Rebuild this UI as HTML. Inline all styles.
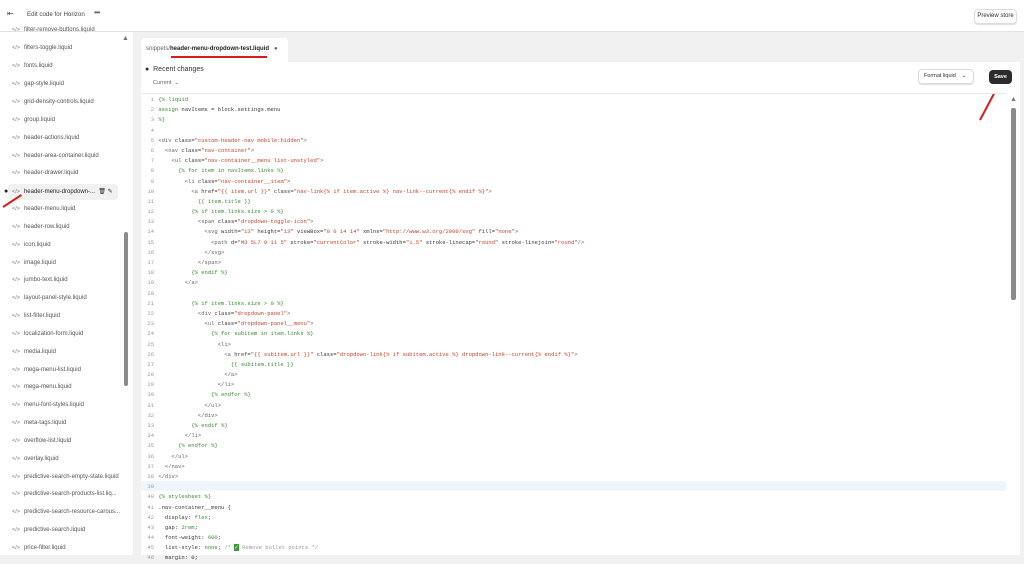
<!DOCTYPE html>
<html><head><meta charset="utf-8"><style>
*{margin:0;padding:0;box-sizing:border-box}
body{width:1024px;height:555px;overflow:hidden;background:#f1f1f1;font-family:"Liberation Sans",sans-serif;position:relative;color:#303030}
.top{position:absolute;left:0;top:0;width:1024px;height:32px;background:#fff;border-bottom:1px solid #e3e3e3}
.top .t{position:absolute;left:27px;top:11px;font-size:6.2px;color:#444}
.top .dots{position:absolute;left:94px;top:8px;font-size:8px;color:#666;letter-spacing:-1px}
.prev{position:absolute;left:974px;top:9px;width:43px;height:15px;border:1px solid #ddd;border-radius:4px;font-size:6px;text-align:center;line-height:13px;background:#fff;box-shadow:0 1px 1px #ddd}
.side{position:absolute;left:0;top:32px;width:133px;height:523px;background:#fff}
.it{position:absolute;left:12px;font-size:6px;color:#555;white-space:nowrap}
.it i{font-style:normal;color:#777;margin-right:4px;font-size:5.5px}
.sel{position:absolute;left:8px;top:152px;width:110px;height:16px;background:#f1f1f1;border-radius:4px}
.sb{position:absolute;left:124px;top:200px;width:4px;height:154px;background:#8a8a8a;border-radius:2px}
.tab{position:absolute;left:141px;top:38px;width:147px;height:25px;background:#fff;border-radius:4px 4px 0 0}
.tab span{position:absolute;left:5px;top:8px;font-size:6px;color:#666;white-space:nowrap}
.tab b{color:#222}
.ul{position:absolute;left:171px;top:56px;width:96px;height:2px;background:#d91c1c}
.panel{position:absolute;left:141px;top:62px;width:879px;height:493px;background:#fff}
.rc{position:absolute;left:145px;top:66px;font-size:7px;color:#333}
.cur{position:absolute;left:153px;top:80px;font-size:5.5px;color:#666}
.fmt{position:absolute;left:918px;top:69px;width:56px;height:15px;border:1px solid #ddd;border-radius:4px;font-size:5.5px;line-height:13px;padding-left:5px;box-shadow:0 1px 1px #ddd}
.save{position:absolute;left:989px;top:70px;width:23px;height:14px;background:#2c2c2c;border-radius:4px;color:#fff;font-size:5.5px;font-weight:bold;text-align:center;line-height:14px}
.hr{position:absolute;left:141px;top:93px;width:865px;height:1px;background:#e8e8e8}
.code{position:absolute;left:141px;top:95px;font-family:"Liberation Mono",monospace;font-size:5.5px;line-height:10.18px;white-space:pre;color:#3a3a3a}
.ln{display:inline-block;width:13px;text-align:right;color:#999;margin-right:1px}
.g{color:#3d8b37}.s{color:#c4452c}.t{color:#666}
.hl{position:absolute;left:141px;top:481px;width:865px;height:10px;background:#eef5fb}
.msb{position:absolute;left:1011px;top:108px;width:5px;height:192px;background:#8a8a8a;border-radius:2px}
.arr{position:absolute;height:2px;background:#d91c1c;transform-origin:0 50%}
</style></head><body>
<div class="top"><span style="position:absolute;left:7px;top:9px;font-size:8px;color:#555">⇤</span><span class="t">Edit code for Horizon</span><span class="dots">•••</span><div class="prev">Preview store</div></div>
<div class="side">
<div class="sel"></div>
<div class="it" style="top:-5px"><i>&lt;/&gt;</i>filter-remove-buttons.liquid</div>
<div class="it" style="top:13px"><i>&lt;/&gt;</i>filters-toggle.liquid</div>
<div class="it" style="top:31px"><i>&lt;/&gt;</i>fonts.liquid</div>
<div class="it" style="top:49px"><i>&lt;/&gt;</i>gap-style.liquid</div>
<div class="it" style="top:67px"><i>&lt;/&gt;</i>grid-density-controls.liquid</div>
<div class="it" style="top:85px"><i>&lt;/&gt;</i>group.liquid</div>
<div class="it" style="top:103px"><i>&lt;/&gt;</i>header-actions.liquid</div>
<div class="it" style="top:121px"><i>&lt;/&gt;</i>header-area-container.liquid</div>
<div class="it" style="top:138px"><i>&lt;/&gt;</i>header-drawer.liquid</div>
<div class="it" style="top:156px;color:#222"><span style="position:absolute;left:-8px;font-size:7px">●</span><i>&lt;/&gt;</i>header-menu-dropdown-... &nbsp;🗑 ✎</div>
<div class="it" style="top:174px"><i>&lt;/&gt;</i>header-menu.liquid</div>
<div class="it" style="top:192px"><i>&lt;/&gt;</i>header-row.liquid</div>
<div class="it" style="top:210px"><i>&lt;/&gt;</i>icon.liquid</div>
<div class="it" style="top:228px"><i>&lt;/&gt;</i>image.liquid</div>
<div class="it" style="top:245px"><i>&lt;/&gt;</i>jumbo-text.liquid</div>
<div class="it" style="top:263px"><i>&lt;/&gt;</i>layout-panel-style.liquid</div>
<div class="it" style="top:281px"><i>&lt;/&gt;</i>list-filter.liquid</div>
<div class="it" style="top:299px"><i>&lt;/&gt;</i>localization-form.liquid</div>
<div class="it" style="top:317px"><i>&lt;/&gt;</i>media.liquid</div>
<div class="it" style="top:335px"><i>&lt;/&gt;</i>mega-menu-list.liquid</div>
<div class="it" style="top:352px"><i>&lt;/&gt;</i>mega-menu.liquid</div>
<div class="it" style="top:370px"><i>&lt;/&gt;</i>menu-font-styles.liquid</div>
<div class="it" style="top:388px"><i>&lt;/&gt;</i>meta-tags.liquid</div>
<div class="it" style="top:406px"><i>&lt;/&gt;</i>overflow-list.liquid</div>
<div class="it" style="top:424px"><i>&lt;/&gt;</i>overlay.liquid</div>
<div class="it" style="top:442px"><i>&lt;/&gt;</i>predictive-search-empty-state.liquid</div>
<div class="it" style="top:459px"><i>&lt;/&gt;</i>predictive-search-products-list.liq...</div>
<div class="it" style="top:477px"><i>&lt;/&gt;</i>predictive-search-resource-carous...</div>
<div class="it" style="top:495px"><i>&lt;/&gt;</i>predictive-search.liquid</div>
<div class="it" style="top:513px"><i>&lt;/&gt;</i>price-filter.liquid</div>
<div style="position:absolute;left:122px;top:3px;font-size:7px;color:#777">▲</div>
<div class="sb"></div>
</div>
<div class="arr" style="left:3px;top:206px;width:22px;transform:rotate(-33deg)"></div>
<div class="tab"><span>snippets/<b>header-menu-dropdown-test.liquid</b> &nbsp; ●</span></div>
<div class="ul"></div>
<div class="panel"></div>
<div class="rc">● &nbsp;Recent changes</div>
<div class="cur">Current &nbsp;⌄</div>
<div class="fmt">Format liquid &nbsp;&nbsp; ⌄</div>
<div class="save">Save</div>
<div class="arr" style="left:980px;top:119px;width:30px;transform:rotate(-62deg)"></div>
<div class="hr"></div>
<div class="hl"></div>
<div style="position:absolute;left:1010px;top:96px;font-size:7px;color:#777">▲</div>
<div class="msb"></div>
<div class="code"><span class="ln">1</span> <span class="g">{% liquid</span>
<span class="ln">2</span> <span class="g">assign</span> navItems = block.settings.menu
<span class="ln">3</span> <span class="g">%}</span>
<span class="ln">4</span>
<span class="ln">5</span> <span class="t">&lt;div</span> class=<span class="s">"custom-header-nav mobile:hidden"</span><span class="t">&gt;</span>
<span class="ln">6</span>   <span class="t">&lt;nav</span> class=<span class="s">"nav-container"</span><span class="t">&gt;</span>
<span class="ln">7</span>     <span class="t">&lt;ul</span> class=<span class="s">"nav-container__menu list-unstyled"</span><span class="t">&gt;</span>
<span class="ln">8</span>       <span class="g">{% for item in navItems.links %}</span>
<span class="ln">9</span>         <span class="t">&lt;li</span> class=<span class="s">"nav-container__item"</span><span class="t">&gt;</span>
<span class="ln">10</span>           <span class="t">&lt;a</span> href=<span class="s">"{{ item.url }}"</span> class=<span class="s">"nav-link{% if item.active %} nav-link--current{% endif %}"</span><span class="t">&gt;</span>
<span class="ln">11</span>             <span class="g">{{ item.title }}</span>
<span class="ln">12</span>           <span class="g">{% if item.links.size &gt; 0 %}</span>
<span class="ln">13</span>             <span class="t">&lt;span</span> class=<span class="s">"dropdown-toggle-icon"</span><span class="t">&gt;</span>
<span class="ln">14</span>               <span class="t">&lt;svg</span> width=<span class="s">"13"</span> height=<span class="s">"13"</span> viewBox=<span class="s">"0 0 14 14"</span> xmlns=<span class="s">"http://www.w3.org/2000/svg"</span> fill=<span class="s">"none"</span><span class="t">&gt;</span>
<span class="ln">15</span>                 <span class="t">&lt;path</span> d=<span class="s">"M3 5L7 9 11 5"</span> stroke=<span class="s">"currentColor"</span> stroke-width=<span class="s">"1.5"</span> stroke-linecap=<span class="s">"round"</span> stroke-linejoin=<span class="s">"round"</span><span class="t">/&gt;</span>
<span class="ln">16</span>               <span class="t">&lt;/svg&gt;</span>
<span class="ln">17</span>             <span class="t">&lt;/span&gt;</span>
<span class="ln">18</span>           <span class="g">{% endif %}</span>
<span class="ln">19</span>         <span class="t">&lt;/a&gt;</span>
<span class="ln">20</span>
<span class="ln">21</span>           <span class="g">{% if item.links.size &gt; 0 %}</span>
<span class="ln">22</span>             <span class="t">&lt;div</span> class=<span class="s">"dropdown-panel"</span><span class="t">&gt;</span>
<span class="ln">23</span>               <span class="t">&lt;ul</span> class=<span class="s">"dropdown-panel__menu"</span><span class="t">&gt;</span>
<span class="ln">24</span>                 <span class="g">{% for subitem in item.links %}</span>
<span class="ln">25</span>                   <span class="t">&lt;li&gt;</span>
<span class="ln">26</span>                     <span class="t">&lt;a</span> href=<span class="s">"{{ subitem.url }}"</span> class=<span class="s">"dropdown-link{% if subitem.active %} dropdown-link--current{% endif %}"</span><span class="t">&gt;</span>
<span class="ln">27</span>                       <span class="g">{{ subitem.title }}</span>
<span class="ln">28</span>                     <span class="t">&lt;/a&gt;</span>
<span class="ln">29</span>                   <span class="t">&lt;/li&gt;</span>
<span class="ln">30</span>                 <span class="g">{% endfor %}</span>
<span class="ln">31</span>               <span class="t">&lt;/ul&gt;</span>
<span class="ln">32</span>             <span class="t">&lt;/div&gt;</span>
<span class="ln">33</span>           <span class="g">{% endif %}</span>
<span class="ln">34</span>         <span class="t">&lt;/li&gt;</span>
<span class="ln">35</span>       <span class="g">{% endfor %}</span>
<span class="ln">36</span>     <span class="t">&lt;/ul&gt;</span>
<span class="ln">37</span>   <span class="t">&lt;/nav&gt;</span>
<span class="ln">38</span> <span class="t">&lt;/div&gt;</span>
<span class="ln">39</span>
<span class="ln">40</span> <span class="g">{% stylesheet %}</span>
<span class="ln">41</span> .nav-container__menu {
<span class="ln">42</span>   display: <span class="g">flex</span>;
<span class="ln">43</span>   gap: <span class="g">2rem</span>;
<span class="ln">44</span>   font-weight: <span class="g">600</span>;
<span class="ln">45</span>   list-style: <span class="g">none</span>; <span style="color:#999">/* <span style="background:#3a9a3a;color:#fff">✓</span> Remove bullet points */</span>
<span class="ln">46</span>   margin: 0;</div>
</body></html>
